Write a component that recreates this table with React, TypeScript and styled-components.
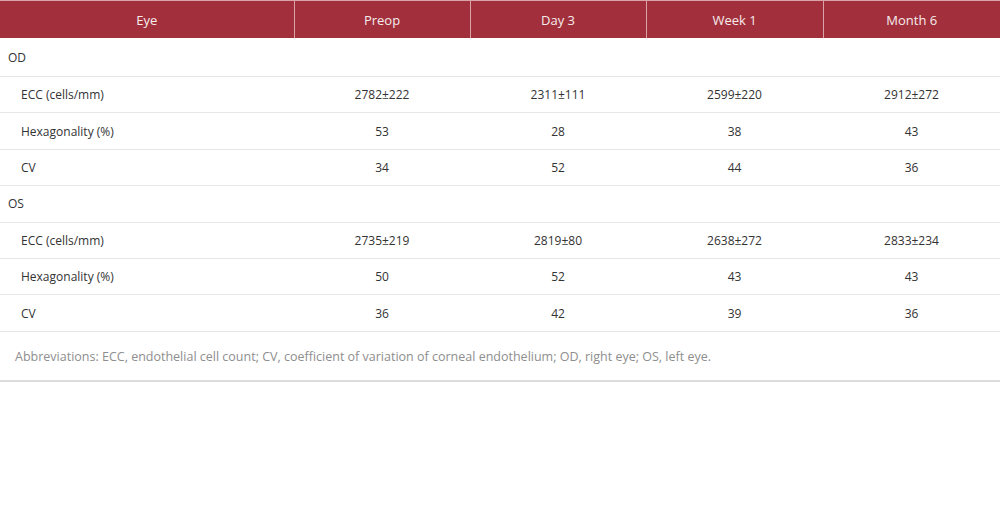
import React from "react";
import styled, {createGlobalStyle} from "styled-components";

const GlobalStyle = createGlobalStyle`
    html, body {
        margin: 0;
        padding: 0;
        background: #ffffff;
        font-family: "Open Sans", "Liberation Sans", sans-serif;
    }
`

const Wrapper = styled.div`
    width: 1000px;
    border-bottom: 2px solid #dcdcdc;
`

const Table = styled.table`
    width: 100%;
    border-collapse: collapse;
    table-layout: fixed;
`

const HeadCell = styled.th<{first?: boolean}>`
    height: 37px;
    padding: 0;
    background-color: #a2303c;
    color: #f6ecec;
    font-size: 13px;
    font-weight: normal;
    text-align: center;
    border-left: ${props => props.first ? "none" : "1px solid #d9a3a9"};
    border-top: 1px solid #d9a3a9;
`

type RowProps = {
    first?: boolean
}
const BodyRow = styled.tr<RowProps>`
    height: ${props => props.first ? "38.5px" : "36.4px"};
    border-top: ${props => props.first ? "none" : "1px solid #e6e6e6"};
`

type LabelProps = {
    indent: boolean
}
const LabelCell = styled.td<LabelProps>`
    padding: 0 0 0 ${props => props.indent ? "21px" : "8px"};
    font-size: 12px;
    color: #333333;
`

const ValueCell = styled.td`
    padding: 0;
    font-size: 12px;
    color: #333333;
    text-align: center;
`

const Footnote = styled.div`
    border-top: 1px solid #e6e6e6;
    height: 48px;
    display: flex;
    align-items: center;
    padding-left: 15px;
    font-size: 12.5px;
    color: #8e8e8e;
`

type Row = {
    label: string,
    group?: boolean,
    values?: string[]
}

const rows: Row[] = [
    {label: "OD", group: true},
    {label: "ECC (cells/mm)", values: ["2782±222", "2311±111", "2599±220", "2912±272"]},
    {label: "Hexagonality (%)", values: ["53", "28", "38", "43"]},
    {label: "CV", values: ["34", "52", "44", "36"]},
    {label: "OS", group: true},
    {label: "ECC (cells/mm)", values: ["2735±219", "2819±80", "2638±272", "2833±234"]},
    {label: "Hexagonality (%)", values: ["50", "52", "43", "43"]},
    {label: "CV", values: ["36", "42", "39", "36"]}
];

const headers = ["Eye", "Preop", "Day 3", "Week 1", "Month 6"];

export default function App(): React.ReactElement {
    return <>
        <GlobalStyle/>
        <Wrapper>
            <Table>
                <colgroup>
                    <col style={{width: "294px"}}/>
                    <col style={{width: "176px"}}/>
                    <col style={{width: "176px"}}/>
                    <col style={{width: "177px"}}/>
                    <col/>
                </colgroup>
                <thead>
                    <tr>
                        {headers.map((h, i) => <HeadCell key={h} first={i === 0}>{h}</HeadCell>)}
                    </tr>
                </thead>
                <tbody>
                    {rows.map((row, i) => <BodyRow key={i} first={i === 0}>
                        <LabelCell indent={!row.group}>{row.label}</LabelCell>
                        {row.group
                            ? <ValueCell colSpan={4}/>
                            : row.values!.map((v, j) => <ValueCell key={j}>{v}</ValueCell>)}
                    </BodyRow>)}
                </tbody>
            </Table>
            <Footnote>
                Abbreviations: ECC, endothelial cell count; CV, coefficient of variation of corneal endothelium; OD, right eye; OS, left eye.
            </Footnote>
        </Wrapper>
    </>
}
